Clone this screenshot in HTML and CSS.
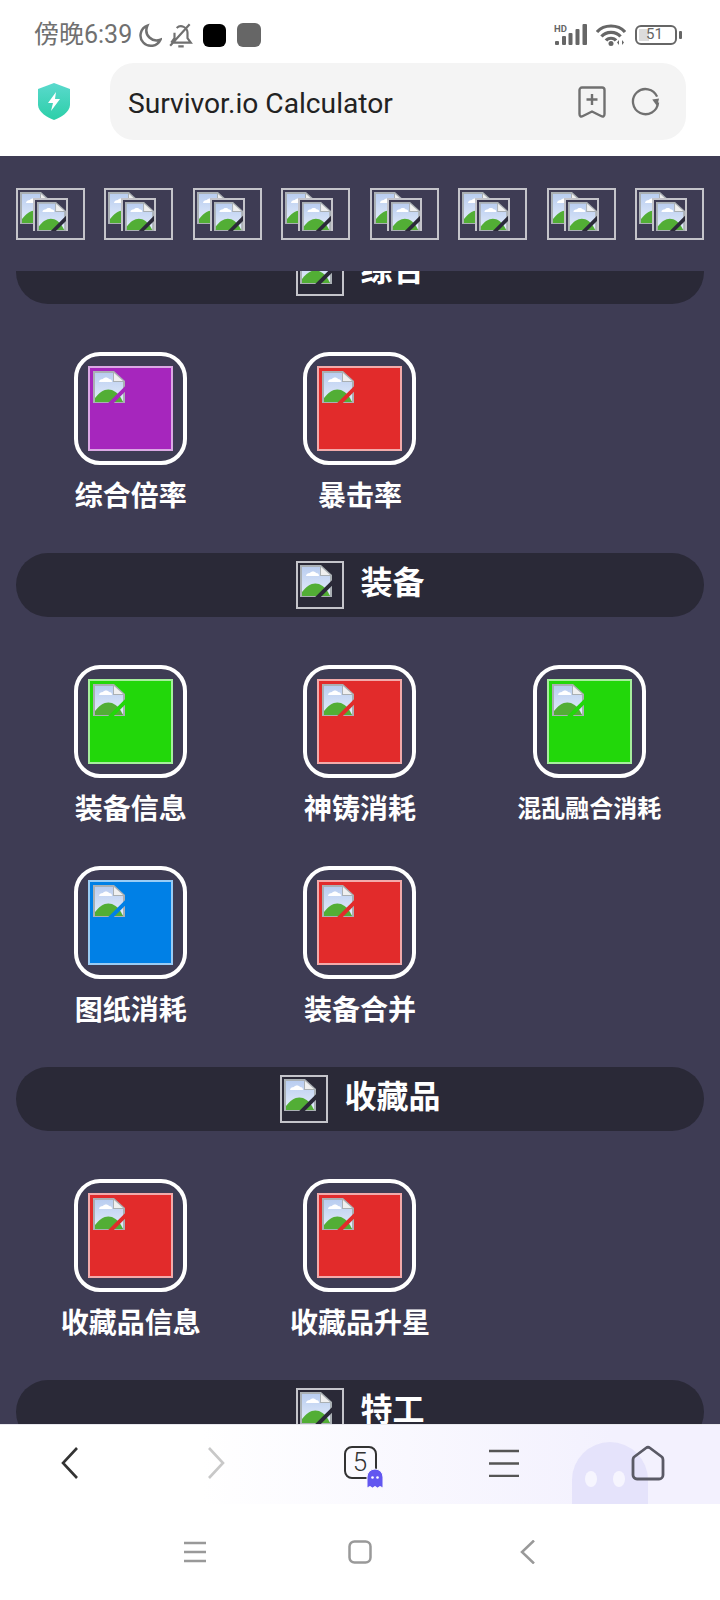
FILE: index.html
```html
<!DOCTYPE html>
<html lang="zh">
<head>
    <meta charset="UTF-8">
    <meta name="viewport" content="width=device-width, initial-scale=1.0">
    <title>Survivor.io Calculator</title>
    <link rel="stylesheet" href="styles.css">
</head>
<body>
    <svg class="defs" width="0" height="0">
        <defs>
            <linearGradient id="sky" x1="0" y1="0" x2="0" y2="1">
                <stop offset="0" stop-color="#b9cdf0"/>
                <stop offset="1" stop-color="#e3ecfa"/>
            </linearGradient>
        </defs>
        <symbol id="broken" viewBox="0 0 32 32">
            <path d="M0 0H21L32 10V32H0Z" fill="#aab0b4"/>
            <path d="M2 2H20V11H30V30H2Z" fill="url(#sky)"/>
            <path d="M6 11C6 9 8 8 10 8C11 6 15 6 16 8C18 8 19 9 19 11Z" fill="#fff"/>
            <path d="M2 31V27C7 20 13 17 19 19C24 21 28 26 30 31Z" fill="#52ae35"/>
            <path d="M21 2L30 10H21Z" fill="#f0f0f0"/>
            <path d="M15 35L35 15" stroke="currentColor" stroke-width="4"/>
        </symbol>
    </svg>

    <div class="status-bar">
        <div class="status-left">
            <span class="status-time">傍晚6:39</span>
            <svg class="ic-moon" viewBox="0 0 24 24"><path d="M10 2.500A10 10 0 1 0 22.500 16C15 19 6 12 10 2.500Z"/></svg>
            <svg class="ic-bell" viewBox="0 0 24 24"><path d="M3 19H21L18 15V10A6 6 0 0 0 8 5.500M6 10V15L3 19M2 22L20 2M9.500 22.500H14.500"/></svg>
            <span class="app-dot dot-black"></span>
            <span class="app-dot dot-gray"></span>
        </div>
        <div class="status-right">
            <svg class="ic-signal" viewBox="0 0 34 22">
                <text x="0" y="7.500" class="hd-text">HD</text>
                <rect x="1" y="17" width="4" height="4" rx="1"/>
                <rect x="8" y="12" width="4" height="9" rx="1"/>
                <rect x="14.500" y="9" width="4" height="12" rx="1"/>
                <rect x="21.500" y="5" width="4" height="16" rx="1"/>
                <rect x="28.500" y="0" width="4.500" height="21" rx="1"/>
            </svg>
            <svg class="ic-wifi" viewBox="0 0 30 22">
                <path d="M1 8C8 0 22 0 29 8M5.500 12.500C10 7 20 7 24.500 12.500M10 16.500C12 13.500 18 13.500 20 16.500"/>
                <circle cx="15" cy="19.500" r="2.500" class="fill"/>
                <path d="M23 21V16L21 18.500ZM26 16V21L28 18.500Z" class="fill"/>
            </svg>
            <div class="battery">
                <div class="battery-body"><span class="battery-level"></span><span class="battery-num">51</span></div>
                <span class="battery-tip"></span>
            </div>
        </div>
    </div>

    <div class="browser-bar">
        <svg class="ic-shield" viewBox="0 0 32 37">
            <defs>
                <linearGradient id="shield" x1="0" y1="0" x2="0" y2="1">
                    <stop offset="0" stop-color="#5ad9cd"/>
                    <stop offset="1" stop-color="#2ccfa8"/>
                </linearGradient>
            </defs>
            <path d="M16 0L32 6V22C32 29 22 35 16 37C10 35 0 29 0 22V6Z" fill="url(#shield)"/>
            <path d="M18 9L10 20H15L13 28L22 16H17Z" fill="#fff"/>
        </svg>
        <div class="url-box">
            <span class="url-text">Survivor.io Calculator</span>
            <svg class="ic-bookmark" viewBox="0 0 28 32"><path d="M4 1.500H24A2.500 2.500 0 0 1 26.500 4V28C26.500 30.500 25 31 23 30L14 25.500L5 30C3 31 1.500 30.500 1.500 28V4A2.500 2.500 0 0 1 4 1.500ZM14 8V19M8.500 13.500H19.500"/></svg>
            <svg class="ic-reload" viewBox="0 0 30 30"><path d="M27 10A13 13 0 1 0 28 16"/><path d="M22 13L29 12L27 20Z" class="fill"/></svg>
        </div>
    </div>

    <main class="page">
        <nav class="top-nav">
            <a class="nav-img"><svg class="nav-ic"><use href="#broken"/></svg><span class="nav-inner"><svg class="nav-ic2"><use href="#broken"/></svg></span></a>
            <a class="nav-img"><svg class="nav-ic"><use href="#broken"/></svg><span class="nav-inner"><svg class="nav-ic2"><use href="#broken"/></svg></span></a>
            <a class="nav-img"><svg class="nav-ic"><use href="#broken"/></svg><span class="nav-inner"><svg class="nav-ic2"><use href="#broken"/></svg></span></a>
            <a class="nav-img"><svg class="nav-ic"><use href="#broken"/></svg><span class="nav-inner"><svg class="nav-ic2"><use href="#broken"/></svg></span></a>
            <a class="nav-img"><svg class="nav-ic"><use href="#broken"/></svg><span class="nav-inner"><svg class="nav-ic2"><use href="#broken"/></svg></span></a>
            <a class="nav-img"><svg class="nav-ic"><use href="#broken"/></svg><span class="nav-inner"><svg class="nav-ic2"><use href="#broken"/></svg></span></a>
            <a class="nav-img"><svg class="nav-ic"><use href="#broken"/></svg><span class="nav-inner"><svg class="nav-ic2"><use href="#broken"/></svg></span></a>
            <a class="nav-img"><svg class="nav-ic"><use href="#broken"/></svg><span class="nav-inner"><svg class="nav-ic2"><use href="#broken"/></svg></span></a>
        </nav>

        <div class="scroll-area">
            <div class="scroll-content">
                <h2 class="section-title"><span class="title-img"><svg class="title-ic"><use href="#broken"/></svg></span><span class="title-text">综合</span></h2>
                <div class="tile-grid">
                    <a class="tile"><span class="tile-frame"><span class="tile-img purple"><svg class="tile-ic"><use href="#broken"/></svg></span></span><span class="tile-label">综合倍率</span></a>
                    <a class="tile"><span class="tile-frame"><span class="tile-img red"><svg class="tile-ic"><use href="#broken"/></svg></span></span><span class="tile-label">暴击率</span></a>
                </div>

                <h2 class="section-title"><span class="title-img"><svg class="title-ic"><use href="#broken"/></svg></span><span class="title-text">装备</span></h2>
                <div class="tile-grid">
                    <a class="tile"><span class="tile-frame"><span class="tile-img green"><svg class="tile-ic"><use href="#broken"/></svg></span></span><span class="tile-label">装备信息</span></a>
                    <a class="tile"><span class="tile-frame"><span class="tile-img red"><svg class="tile-ic"><use href="#broken"/></svg></span></span><span class="tile-label">神铸消耗</span></a>
                    <a class="tile"><span class="tile-frame"><span class="tile-img green"><svg class="tile-ic"><use href="#broken"/></svg></span></span><span class="tile-label small">混乱融合消耗</span></a>
                    <a class="tile"><span class="tile-frame"><span class="tile-img blue"><svg class="tile-ic"><use href="#broken"/></svg></span></span><span class="tile-label">图纸消耗</span></a>
                    <a class="tile"><span class="tile-frame"><span class="tile-img red"><svg class="tile-ic"><use href="#broken"/></svg></span></span><span class="tile-label">装备合并</span></a>
                </div>

                <h2 class="section-title"><span class="title-img"><svg class="title-ic"><use href="#broken"/></svg></span><span class="title-text">收藏品</span></h2>
                <div class="tile-grid">
                    <a class="tile"><span class="tile-frame"><span class="tile-img red"><svg class="tile-ic"><use href="#broken"/></svg></span></span><span class="tile-label">收藏品信息</span></a>
                    <a class="tile"><span class="tile-frame"><span class="tile-img red"><svg class="tile-ic"><use href="#broken"/></svg></span></span><span class="tile-label">收藏品升星</span></a>
                </div>

                <h2 class="section-title"><span class="title-img"><svg class="title-ic"><use href="#broken"/></svg></span><span class="title-text">特工</span></h2>
            </div>
        </div>
    </main>

    <div class="browser-nav">
        <svg class="ghost-bg" viewBox="0 0 76 62">
            <path d="M0 62V38A38 38 0 0 1 76 38V62Z" fill="#e5e3fb"/>
            <ellipse cx="19" cy="37" rx="6" ry="8" fill="#f6f5fe"/>
            <ellipse cx="47" cy="37" rx="6" ry="8" fill="#f6f5fe"/>
        </svg>
        <button class="nav-btn"><svg class="ic-chevron back" viewBox="0 0 18 32"><path d="M16 1L2 16L16 31"/></svg></button>
        <button class="nav-btn"><svg class="ic-chevron disabled" viewBox="0 0 18 32"><path d="M2 1L16 16L2 31"/></svg></button>
        <button class="nav-btn">
            <span class="tab-count">5</span>
            <svg class="tab-ghost" viewBox="0 0 16 19">
                <path d="M0 19V8A8 8 0 0 1 16 8V19L13 17.500L10.500 19L8 17.500L5.500 19L3 17.500Z" fill="#6257f0" stroke="#f8f7fe" stroke-width="1"/>
                <circle cx="5.500" cy="8.500" r="1.300" fill="#fff"/>
                <circle cx="10.500" cy="8.500" r="1.300" fill="#fff"/>
            </svg>
        </button>
        <button class="nav-btn"><svg class="ic-menu" viewBox="0 0 32 28"><path d="M1 2H31M1 14.500H31M1 27H31"/></svg></button>
        <button class="nav-btn"><svg class="ic-home" viewBox="0 0 34 36"><path d="M15 3Q17 1.500 19 3L31 12Q32 13 32 15V30A4 4 0 0 1 28 34H6A4 4 0 0 1 2 30V15Q2 13 3 12Z"/></svg></button>
    </div>

    <div class="system-nav">
        <svg class="sys-ic" viewBox="0 0 24 24"><path d="M1 3H23M1 12H23M1 21H23"/></svg>
        <svg class="sys-ic" viewBox="0 0 24 24"><rect x="1.500" y="1.500" width="21" height="21" rx="5"/></svg>
        <svg class="sys-ic" viewBox="0 0 24 24"><path d="M21 0.500L9 12L21 23.500"/></svg>
    </div>
</body>
</html>
```

FILE: styles.css
```css
* {
    box-sizing: border-box;
    margin: 0;
    padding: 0;
}

body {
    width: 720px;
    height: 1600px;
    overflow: hidden;
    display: flex;
    flex-direction: column;
    background-color: #fff;
    font-family: 'Noto Sans CJK SC', 'Noto Sans', sans-serif;
}

.defs {
    display: block;
    height: 0;
}

/* status bar */
.status-bar {
    height: 62px;
    flex: none;
    padding: 8px 38px 0 34px;
    display: flex;
    align-items: center;
    justify-content: space-between;
    color: #707070;
}

.status-left,
.status-right {
    display: flex;
    align-items: center;
}

.status-time {
    font-family: Roboto, 'Noto Sans CJK SC', sans-serif;
    font-size: 25px;
    line-height: 30px;
}

.ic-moon {
    width: 25px;
    height: 25px;
    margin-left: 5px;
    fill: none;
    stroke: #707070;
    stroke-width: 2.400;
}

.ic-bell {
    width: 26px;
    height: 26px;
    margin-left: 6px;
    fill: none;
    stroke: #707070;
    stroke-width: 2;
}

.app-dot {
    width: 23px;
    height: 23px;
    border-radius: 6px;
    margin-left: 9px;
}

.dot-black {
    background-color: #000;
}

.dot-gray {
    width: 24px;
    height: 24px;
    margin-left: 11px;
    background-color: #666;
}

.ic-signal {
    width: 34px;
    height: 22px;
    fill: #666;
}

.hd-text {
    font-family: Roboto, sans-serif;
    font-size: 9.500px;
    font-weight: 700;
}

.ic-wifi {
    width: 30px;
    height: 22px;
    margin-left: 8px;
    fill: none;
    stroke: #666;
    stroke-width: 3.200;
}

.ic-wifi .fill {
    fill: #666;
    stroke: none;
}

.battery {
    display: flex;
    align-items: center;
    margin-left: 9px;
}

.battery-body {
    width: 42px;
    height: 20px;
    border: 2.500px solid #666;
    border-radius: 6px;
    padding: 2px;
    display: flex;
    position: relative;
}

.battery-level {
    width: 10px;
    background-color: #dcdcdc;
}

.battery-num {
    position: absolute;
    left: 9px;
    top: 0;
    color: #666;
    font-family: Roboto, sans-serif;
    font-size: 15px;
    line-height: 15px;
}

.battery-tip {
    width: 3px;
    height: 8px;
    margin-left: 2px;
    background-color: #666;
    border-radius: 1px;
}

/* browser toolbar */
.browser-bar {
    height: 94px;
    flex: none;
    display: flex;
    align-items: flex-start;
    padding: 1px 34px 0 38px;
}

.ic-shield {
    width: 32px;
    height: 37px;
    margin-top: 20px;
    flex: none;
}

.url-box {
    width: 576px;
    height: 77px;
    margin-left: 40px;
    background-color: #f4f4f4;
    border-radius: 24px;
    display: flex;
    align-items: center;
    padding: 0 26px 0 18px;
}

.url-text {
    flex: 1;
    padding-top: 3px;
    font-family: Roboto, sans-serif;
    font-size: 28.200px;
    color: #222;
}

.ic-bookmark {
    width: 28px;
    height: 32px;
    fill: none;
    stroke: #707070;
    stroke-width: 2.400;
}

.ic-reload {
    width: 29px;
    height: 29px;
    margin-left: 25px;
    fill: none;
    stroke: #707070;
    stroke-width: 2.400;
}

.ic-reload .fill {
    fill: #707070;
    stroke: none;
}

/* page content */
.page {
    height: 1268px;
    flex: none;
    background-color: #3e3c54;
    display: flex;
    flex-direction: column;
    color: #fff;
}

.top-nav {
    height: 115px;
    flex: none;
    padding: 32px 16px 31px;
    display: flex;
    justify-content: space-between;
}

.nav-img {
    width: 69px;
    height: 52px;
    border: 2px solid #c4c4ca;
    padding: 2px;
    display: flex;
    align-items: flex-start;
    color: #3e3c54;
}

.nav-ic {
    width: 32px;
    height: 32px;
    flex: none;
}

.nav-inner {
    width: 35px;
    height: 33px;
    flex: none;
    margin: 6px 0 0 -19px;
    padding: 2px 0 0 2px;
    border: solid #c4c4ca;
    border-width: 2px 2px 0 2px;
    background-color: #3e3c54;
}

.nav-ic2 {
    display: block;
    width: 29px;
    height: 29px;
    color: #2b2a39;
}

.scroll-area {
    flex: 1;
    overflow: hidden;
}

.scroll-content {
    margin-top: -31.500px;
}

.section-title {
    height: 64px;
    margin: 0 16px;
    padding-left: 1px;
    border-radius: 32px;
    background-color: #2a2937;
    display: flex;
    align-items: center;
    justify-content: center;
    gap: 16px;
    font-size: 32px;
    font-weight: 700;
    line-height: 48px;
    color: #fff;
}

.title-text {
    margin-bottom: 10px;
}

.title-img {
    width: 48px;
    height: 48px;
    border: 2px solid #c4c4ca;
    padding: 2px;
    color: #2a2937;
}

.title-ic {
    display: block;
    width: 32px;
    height: 32px;
}

.tile-grid {
    display: grid;
    grid-template-columns: repeat(3, 1fr);
    margin: 48.300px 16px 0;
}

.tile {
    height: 201px;
    display: flex;
    flex-direction: column;
    align-items: center;
}

.tile-frame {
    width: 113px;
    height: 113px;
    flex: none;
    border: 4px solid #fff;
    border-radius: 26px;
    display: flex;
    align-items: center;
    justify-content: center;
}

.tile-img {
    width: 85px;
    height: 85px;
    border: 2px solid rgba(255, 255, 255, 0.6);
    padding: 3px;
}

.tile-ic {
    display: block;
    width: 32px;
    height: 32px;
}

.purple {
    background-color: #a626bd;
    color: #a626bd;
}

.red {
    background-color: #e22b2b;
    color: #e22b2b;
}

.green {
    background-color: #22d70a;
    color: #22d70a;
}

.blue {
    background-color: #0080e6;
    color: #0080e6;
}

.tile-label {
    margin-top: 13px;
    font-size: 28px;
    font-weight: 700;
    line-height: 32px;
    white-space: nowrap;
    color: #fff;
}

.tile-label.small {
    font-size: 24px;
}

/* browser bottom bar */
.browser-nav {
    position: relative;
    height: 80px;
    flex: none;
    border-top: 1px solid #e8e8ee;
    background: linear-gradient(90deg, #fff 28%, #f3f1fe 85%);
    display: grid;
    grid-template-columns: repeat(5, 144px);
    align-items: center;
}

.ghost-bg {
    position: absolute;
    left: 572px;
    bottom: 0;
    width: 76px;
    height: 62px;
}

.nav-btn {
    position: relative;
    height: 64px;
    background: none;
    border: none;
    display: flex;
    align-items: center;
    justify-content: center;
    margin-bottom: 4px;
}

.ic-chevron {
    width: 18px;
    height: 32px;
    fill: none;
    stroke: #333;
    stroke-width: 2.600;
}

.ic-chevron.back {
    margin-right: 4px;
}

.ic-chevron.disabled {
    stroke: #c8c8c8;
}

.tab-count {
    width: 33px;
    height: 33px;
    border: 2.500px solid #333;
    border-radius: 8px;
    font-family: Roboto, sans-serif;
    font-size: 26px;
    font-weight: 300;
    line-height: 28px;
    text-align: center;
    color: #333;
}

.tab-ghost {
    position: absolute;
    left: 79px;
    top: 38px;
    width: 16px;
    height: 19px;
    overflow: visible;
}

.ic-menu {
    width: 32px;
    height: 28px;
    fill: none;
    stroke: #555;
    stroke-width: 2.600;
}

.ic-home {
    width: 34px;
    height: 36px;
    fill: none;
    stroke: #5a5a66;
    stroke-width: 2.800;
    stroke-linejoin: round;
}

/* android navigation */
.system-nav {
    height: 96px;
    flex: none;
    display: flex;
    align-items: center;
    justify-content: center;
    gap: 141px;
}

.sys-ic {
    width: 24px;
    height: 24px;
    fill: none;
    stroke: #999;
    stroke-width: 2.500;
}
```
